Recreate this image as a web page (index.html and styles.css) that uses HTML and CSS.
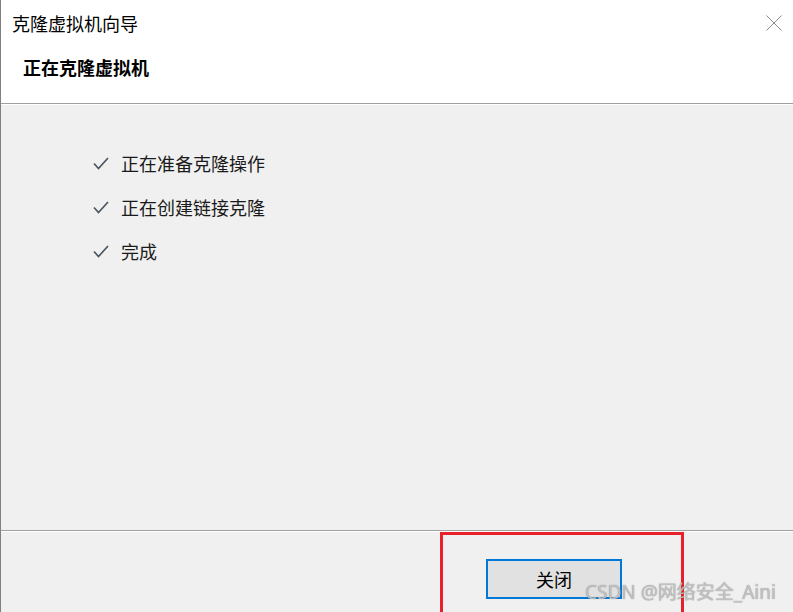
FILE: index.html
```html
<!DOCTYPE html>
<html>
<head>
<meta charset="utf-8">
<link rel="stylesheet" href="styles.css">
</head>
<body>
<div class="window">
  <div class="header">
    <div class="titlebar">
      <span class="title">克隆虚拟机向导</span>
      <svg class="close" width="16" height="16" viewBox="0 0 16 16"><path d="M0.5 0.5 L15.5 15.5 M15.5 0.5 L0.5 15.5" stroke="#8a8a8a" stroke-width="1" fill="none"/></svg>
    </div>
    <div class="subtitle">正在克隆虚拟机</div>
  </div>
  <div class="content">
    <div class="step"><svg class="check" width="16" height="13" viewBox="0 0 16 13"><path d="M1 6.5 L5.5 11.5 L15 1" stroke="#4a5560" stroke-width="1.7" fill="none"/></svg><span>正在准备克隆操作</span></div>
    <div class="step"><svg class="check" width="16" height="13" viewBox="0 0 16 13"><path d="M1 6.5 L5.5 11.5 L15 1" stroke="#4a5560" stroke-width="1.7" fill="none"/></svg><span>正在创建链接克隆</span></div>
    <div class="step"><svg class="check" width="16" height="13" viewBox="0 0 16 13"><path d="M1 6.5 L5.5 11.5 L15 1" stroke="#4a5560" stroke-width="1.7" fill="none"/></svg><span>完成</span></div>
  </div>
  <div class="footer">
    <button class="btn">关闭</button>
  </div>
  <div class="highlight"></div>
  <div class="watermark">CSDN @网络安全_Aini</div>
</div>
</body>
</html>
```

FILE: styles.css
```css
html, body {
  margin: 0;
  padding: 0;
}
body {
  width: 793px;
  height: 612px;
  overflow: hidden;
  font-family: "Noto Sans CJK SC", "Noto Sans", sans-serif;
  color: #000;
}
.window {
  position: relative;
  box-sizing: border-box;
  width: 793px;
  height: 612px;
  border-left: 1px solid #808080;
  background: #f0f0f0;
  display: flex;
  flex-direction: column;
}
.header {
  background: #fff;
  height: 103px;
  border-bottom: 1px solid #a0a0a0;
  box-shadow: 0 1px 0 #fff;
  flex: none;
}
.titlebar {
  height: 44px;
  display: flex;
  align-items: center;
  justify-content: space-between;
  padding-left: 11px;
  padding-right: 11px;
}
.title {
  font-size: 18px;
  line-height: 20px;
  margin-top: 1px;
}
.close {
  display: block;
  margin-top: 1px;
}
.subtitle {
  font-size: 18px;
  font-weight: bold;
  line-height: 20px;
  padding-left: 22px;
  margin-top: 13px;
}
.content {
  flex: 1;
  padding-top: 49px;
  padding-left: 92px;
  display: flex;
  flex-direction: column;
  gap: 24px;
  border-bottom: 1px solid #a0a0a0;
}
.step {
  display: flex;
  align-items: center;
  height: 20px;
  font-size: 18px;
  line-height: 20px;
  color: #1a1a1a;
}
.check {
  display: block;
  margin-right: 12px;
  margin-top: 1px;
}
.footer {
  height: 81px;
  flex: none;
  border-top: 1px solid #fff;
  display: flex;
  padding-left: 485px;
  padding-top: 27px;
  box-sizing: border-box;
}
.btn {
  width: 136px;
  height: 40px;
  box-sizing: border-box;
  border: 2px solid #0078d7;
  background: #e1e1e1;
  font-family: "Noto Sans CJK SC", sans-serif;
  font-size: 18px;
  color: #000;
  padding: 0;
  line-height: 20px;
}
.highlight {
  position: absolute;
  left: 439px;
  top: 532px;
  width: 244px;
  height: 84px;
  box-sizing: border-box;
  border: 3px solid #e8202a;
}
.watermark {
  position: absolute;
  left: 584px;
  top: 580px;
  font-family: "Noto Sans", "Noto Sans CJK SC", sans-serif;
  font-size: 19px;
  line-height: 24px;
  color: rgba(200, 200, 200, 0.9);
  text-shadow: 0 0 1px rgba(60, 60, 60, 0.6);
  white-space: nowrap;
}
```
